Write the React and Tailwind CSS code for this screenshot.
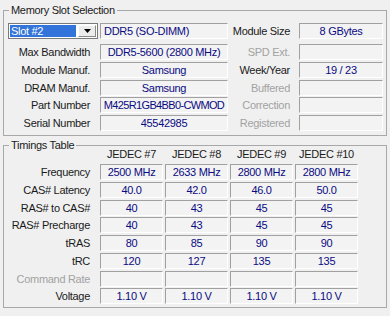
const slotRows = [
    { label: 'Max Bandwidth', value: 'DDR5-5600 (2800 MHz)', rLabel: 'SPD Ext.', rDis: true, rValue: '' },
    { label: 'Module Manuf.', value: 'Samsung', rLabel: 'Week/Year', rValue: '19 / 23' },
    { label: 'DRAM Manuf.', value: 'Samsung', rLabel: 'Buffered', rDis: true, rValue: '' },
    { label: 'Part Number', value: 'M425R1GB4BB0-CWMOD', tight: true, rLabel: 'Correction', rDis: true, rValue: '' },
    { label: 'Serial Number', value: '45542985', rLabel: 'Registered', rDis: true, rValue: '' },
];

const timings = [
    { label: 'Frequency', values: ['2500 MHz', '2633 MHz', '2800 MHz', '2800 MHz'] },
    { label: 'CAS# Latency', values: ['40.0', '42.0', '46.0', '50.0'] },
    { label: 'RAS# to CAS#', values: ['40', '43', '45', '45'] },
    { label: 'RAS# Precharge', values: ['40', '43', '45', '45'] },
    { label: 'tRAS', values: ['80', '85', '90', '90'] },
    { label: 'tRC', values: ['120', '127', '135', '135'] },
    { label: 'Command Rate', disabled: true, values: ['', '', '', ''] },
    { label: 'Voltage', values: ['1.10 V', '1.10 V', '1.10 V', '1.10 V'] },
];

const Field = ({ children, className = '', align = 'center' }) => (
    <div
        className={`h-[16px] flex items-center border-t border-l border-[#a0a0a0] border-r-white border-b-white border-r border-b bg-[#f3f3f3] text-[#0a0a82] whitespace-nowrap overflow-hidden leading-[14px] ${align === 'left' ? 'justify-start pl-[3px]' : 'justify-center'} ${className}`}
    >
        {children}
    </div>
);

const Label = ({ children, disabled }) => (
    <div className={`h-[16px] flex items-center justify-end leading-[14px] whitespace-nowrap ${disabled ? 'text-[#a2a2a2]' : 'text-[#1a1a1a]'}`}>
        {children}
    </div>
);

const App = () => {
    return (
        <div className="w-[390px] h-[316px] bg-[#f0f0f0] pt-[3px] pl-[3px] font-['Liberation_Sans',Arial,sans-serif] text-[11px] tracking-[-0.3px] overflow-hidden">
            <fieldset className="w-[384px] h-[133px] border border-[#a8a8a8] m-0 p-0">
                <legend className="ml-[5px] px-[2px] leading-[14px] text-[#1a1a1a]">Memory Slot Selection</legend>
                <div className="pt-[6px] flex flex-col">
                    <div className="flex items-center h-[16px]">
                        <div className="w-[96px] pl-[4px] pr-[2px]">
                            <div className="h-[16px] w-[90px] bg-white border border-[#7a7a7a] flex items-center p-[1px] gap-[2px]">
                                <div className="h-[12px] flex-1 bg-[#3274da] text-white flex items-center pl-[1px] leading-[12px]">Slot #2</div>
                                <div className="h-[12px] w-[18px] bg-[#ececec] border border-t-white border-l-white border-r-[#8a8a8a] border-b-[#8a8a8a] flex items-center justify-center">
                                    <svg width="7" height="4" viewBox="0 0 7 4"><path d="M0 0H7L3.5 4Z" fill="#000" /></svg>
                                </div>
                            </div>
                        </div>
                        <Field align="left" className="w-[128px]">DDR5 (SO-DIMM)</Field>
                        <div className="w-[71px] pr-[9px]"><Label>Module Size</Label></div>
                        <Field className="w-[84px]">8 GBytes</Field>
                    </div>
                    <div className="mt-[5px] flex flex-col gap-[1.75px]">
                        {slotRows.map((r) => (
                            <div key={r.label} className="flex items-center">
                                <div className="w-[96px] pr-[10px]"><Label>{r.label}</Label></div>
                                <Field className={`w-[128px] ${r.tight ? 'tracking-[-0.65px]' : ''}`}>{r.value}</Field>
                                <div className="w-[71px] pr-[9px]"><Label disabled={r.rDis}>{r.rLabel}</Label></div>
                                <Field className="w-[84px]">{r.rValue}</Field>
                            </div>
                        ))}
                    </div>
                </div>
            </fieldset>

            <fieldset className="mt-[3px] w-[384px] h-[169px] border border-[#a8a8a8] m-0 p-0">
                <legend className="ml-[5px] px-[2px] leading-[12px] text-[#1a1a1a]">Timings Table</legend>
                <div className="-mt-[3px] flex flex-col">
                    <div className="flex h-[12px] items-center leading-[12px] text-[#1a1a1a]">
                        <div className="w-[96px]" />
                        <div className="flex gap-[2px]">
                            {['JEDEC #7', 'JEDEC #8', 'JEDEC #9', 'JEDEC #10'].map((h) => (
                                <div key={h} className="w-[63px] text-center">{h}</div>
                            ))}
                        </div>
                    </div>
                    <div className="mt-[4px] flex flex-col gap-[1.75px]">
                        {timings.map((t) => (
                            <div key={t.label} className="flex items-center">
                                <div className="w-[96px] pr-[10px]"><Label disabled={t.disabled}>{t.label}</Label></div>
                                <div className="flex gap-[2px]">
                                    {t.values.map((v, i) => (
                                        <Field key={i} className="w-[63px]">{v}</Field>
                                    ))}
                                </div>
                            </div>
                        ))}
                    </div>
                </div>
            </fieldset>
        </div>
    );
};

export default App;
